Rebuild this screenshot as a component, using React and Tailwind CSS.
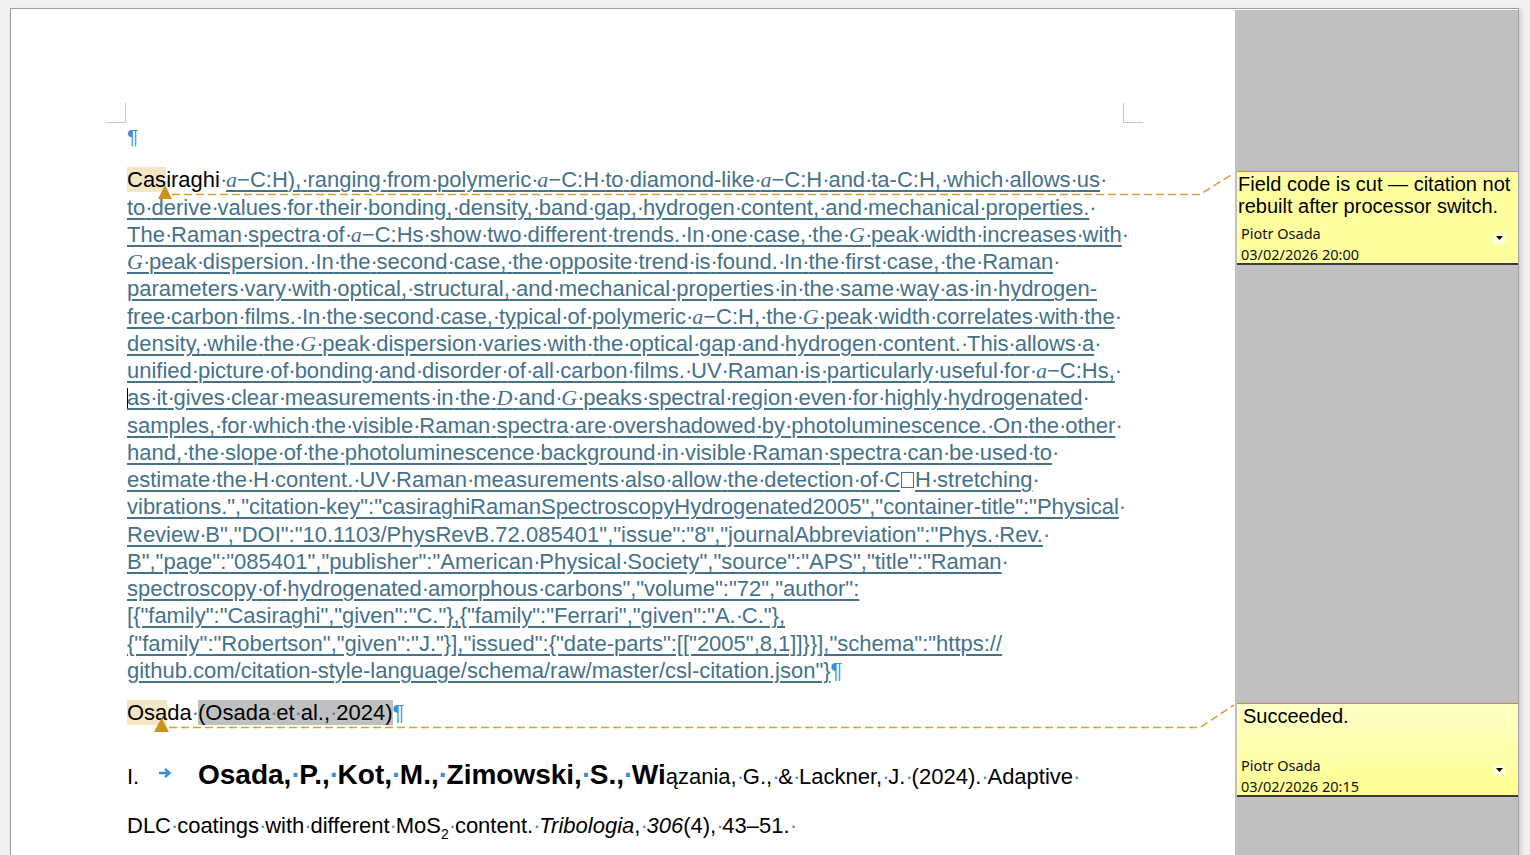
import { Children } from "react"

const TEAL = "text-[#44728a]"

// a formatting-mark dot that takes the width of a space
function Sp({ className = "" }) {
  return <span className={`tracking-[-0.055em] ${className}`}>·</span>
}

function withDots(children) {
  return Children.map(children, (c) => {
    if (typeof c !== "string") return c
    const parts = c.split("·")
    return parts.map((p, i) => (
      <span key={i}>
        {i > 0 ? <Sp /> : null}
        {p}
      </span>
    ))
  })
}

function M({ children }) {
  return <span className="font-['Liberation_Serif'] italic text-[22px]">{children}</span>
}

function Aa() {
  return (
    <>
      <M>a</M>−C:H
    </>
  )
}

function Line({ children, tail = true, before = null }) {
  return (
    <div className="h-[27.25px] leading-[27.25px] whitespace-nowrap">
      {before}
      <span className="underline decoration-[1.5px] underline-offset-[3px]">{withDots(children)}</span>
      {tail ? <Sp /> : null}
    </div>
  )
}

function Dot() {
  return <Sp className="text-[#3a8fd6]" />
}

function Comment({ text, date, gradient, textPad }) {
  return (
    <div
      className={`h-[94px] border-t border-t-[#c8961e] border-b-2 border-b-[#3a3a3a] flex flex-col ${
        gradient ? "bg-gradient-to-b from-[#ffffc8] to-[#ffff90]" : "bg-[#ffffa0]"
      }`}
    >
      <div className={`flex-1 font-['Liberation_Sans'] text-[20px] leading-[22px] text-black ${textPad}`}>{text}</div>
      <div className="flex items-center justify-between pl-[4px] pr-[13px] -mb-[2px]">
        <div className="font-['Noto_Sans'] text-[14.5px] leading-[21px] text-[#111]">
          <div>Piotr Osada</div>
          <div>{date}</div>
        </div>
        <div className="w-[11px] h-[11px] bg-[#ffffd8] flex items-center justify-center mb-[12px]">
          <svg width="7" height="4" viewBox="0 0 7 4">
            <path d="M0 0H7L3.5 4Z" fill="#000" />
          </svg>
        </div>
      </div>
    </div>
  )
}

export default function App() {
  return (
    <div className="relative h-[855px] overflow-hidden bg-[#f0f0f0] pl-[10px] pt-[8px] pr-[11px]">
      <div className="flex h-[900px] border border-[#a0a0a0] shadow-[2px_2px_4px_rgba(0,0,0,0.15)]">
        {/* page */}
        <div className="w-[1224px] bg-white pt-[94px] font-['Liberation_Sans'] text-[22px]">
          <div className="flex justify-between pl-[95px] pr-[92px]">
            <div className="w-[20px] h-[20px] border-r border-b border-[#c4c4c4]" />
            <div className="w-[20px] h-[20px] border-l border-b border-[#c4c4c4]" />
          </div>
          <div className="pl-[116px]">
            <div className="h-[27.25px] leading-[27.25px] text-[#3a8fd6] text-[21px]">¶</div>

            <div className={`mt-[16px] ${TEAL}`}>
              <div className="h-[27.25px] leading-[27.25px] whitespace-nowrap">
                <span className="text-black bg-[#f2e6c4]">Cas</span>
                <span className="text-black">iraghi</span>
                <Sp />
                <span className="underline decoration-[1.5px] underline-offset-[3px]">
                  {withDots([
                    <Aa key="a" />,
                    "),·ranging·from·polymeric·",
                    <Aa key="b" />,
                    "·to·diamond-like·",
                    <Aa key="c" />,
                    "·and·ta-C:H,·which·allows·us",
                  ])}
                </span>
                <Sp />
              </div>
              <Line>to·derive·values·for·their·bonding,·density,·band·gap,·hydrogen·content,·and·mechanical·properties.</Line>
              <Line>
                The·Raman·spectra·of·<M>a</M>−C:Hs·show·two·different·trends.·In·one·case,·the·<M>G</M>·peak·width·increases·with
              </Line>
              <Line>
                <M>G</M>·peak·dispersion.·In·the·second·case,·the·opposite·trend·is·found.·In·the·first·case,·the·Raman
              </Line>
              <Line tail={false}>
                parameters·vary·with·optical,·structural,·and·mechanical·properties·in·the·same·way·as·in·hydrogen-
              </Line>
              <Line>
                free·carbon·films.·In·the·second·case,·typical·of·polymeric·<Aa />,·the·<M>G</M>·peak·width·correlates·with·the
              </Line>
              <Line>
                density,·while·the·<M>G</M>·peak·dispersion·varies·with·the·optical·gap·and·hydrogen·content.·This·allows·a
              </Line>
              <Line>
                unified·picture·of·bonding·and·disorder·of·all·carbon·films.·UV·Raman·is·particularly·useful·for·<M>a</M>−C:Hs,
              </Line>
              <Line before={<span className="inline-block w-px h-[22px] bg-black align-[-5px] -mr-px" />}>
                as·it·gives·clear·measurements·in·the·<M>D</M>·and·<M>G</M>·peaks·spectral·region·even·for·highly·hydrogenated
              </Line>
              <Line>
                samples,·for·which·the·visible·Raman·spectra·are·overshadowed·by·photoluminescence.·On·the·other
              </Line>
              <Line>hand,·the·slope·of·the·photoluminescence·background·in·visible·Raman·spectra·can·be·used·to</Line>
              <Line>
                estimate·the·H·content.·UV·Raman·measurements·also·allow·the·detection·of·C
                <span className="inline-block w-[13px] h-[16px] border border-current align-[-1px] mx-[1px]" />
                H·stretching
              </Line>
              <Line>vibrations.","citation-key":"casiraghiRamanSpectroscopyHydrogenated2005","container-title":"Physical</Line>
              <Line>Review·B","DOI":"10.1103/PhysRevB.72.085401","issue":"8","journalAbbreviation":"Phys.·Rev.</Line>
              <Line>B","page":"085401","publisher":"American·Physical·Society","source":"APS","title":"Raman</Line>
              <Line tail={false}>spectroscopy·of·hydrogenated·amorphous·carbons","volume":"72","author":</Line>
              <Line tail={false}>{'[{"family":"Casiraghi","given":"C."},{"family":"Ferrari","given":"A.·C."},'}</Line>
              <Line tail={false}>{'{"family":"Robertson","given":"J."}],"issued":{"date-parts":[["2005",8,1]]}}],"schema":"https://'}</Line>
              <div className="h-[27.25px] leading-[27.25px] whitespace-nowrap">
                <span className="underline decoration-[1.5px] underline-offset-[3px]">
                  {'github.com/citation-style-language/schema/raw/master/csl-citation.json"}'}
                </span>
                <span className="text-[#3a8fd6]">¶</span>
              </div>
            </div>

            <div className="mt-[15px] h-[27.25px] leading-[27.25px] whitespace-nowrap text-black">
              <span className="bg-[#f2e6c4]">Osa</span>da<Sp className="text-[#4a7a98]" />
              <span className="bg-[#c0c0c0]">
                (Osada<Sp className="text-[#4a7a98]" />et<Sp className="text-[#4a7a98]" />al.,
                <Sp className="text-[#4a7a98]" />2024)
              </span>
              <span className="text-[#3a8fd6]">¶</span>
            </div>

            <div className="mt-[28px] flex items-baseline whitespace-nowrap text-black h-[36px]">
              <span className="w-[31px]">I.</span>
              <span className="w-[40px] flex items-center self-center pt-[2px]">
                <svg width="14" height="12" viewBox="0 0 14 12">
                  <path d="M1 6H11M7 2L11.5 6L7 10" fill="none" stroke="#3a8fd6" strokeWidth="2.4" />
                </svg>
              </span>
              <span className="font-bold text-[28px]">
                Osada,<Dot />P.,<Dot />Kot,<Dot />M.,<Dot />Zimowski,<Dot />S.,<Dot />Wi
              </span>
              <span>
                ązania,<Dot />G.,<Dot />&amp;<Dot />Lackner,<Dot />J.<Dot />(2024).<Dot />Adaptive<Dot />
              </span>
            </div>

            <div className="mt-[22px] h-[27.25px] leading-[27.25px] whitespace-nowrap text-black">
              DLC<Dot />coatings<Dot />with<Dot />different<Dot />MoS<sub className="text-[14px] align-[-2px]">2</sub>
              <Dot />content.<Dot />
              <i>Tribologia</i>,<Dot />
              <i>306</i>(4),<Dot />43–51.<Dot />
            </div>
          </div>
        </div>

        {/* comments margin */}
        <div className="flex-1 bg-[#c0c0c0] pl-[2px] border-t border-t-white">
          <div className="mt-[161px]">
            <Comment
              text={
                <>
                  Field code is cut — citation not
                  <br />
                  rebuilt after processor switch.
                </>
              }
              date="03/02/2026 20:00"
              textPad="pl-[1px] pt-[1px]"
            />
          </div>
          <div className="mt-[438px]">
            <Comment text="Succeeded." date="03/02/2026 20:15" gradient textPad="pl-[6px] pt-[1px]" />
          </div>
        </div>
      </div>

      {/* comment anchors */}
      <svg className="absolute inset-0 pointer-events-none" width="1530" height="855">
        <path d="M172 194.5H1200L1234 173" fill="none" stroke="#d4a030" strokeWidth="1.5" strokeDasharray="8 4" />
        <path d="M169 727.5H1200L1234 705" fill="none" stroke="#d4a030" strokeWidth="1.5" strokeDasharray="8 4" />
        <path d="M165 185L172 199H158Z" fill="#cc9418" />
        <path d="M161.5 718L169 732H154Z" fill="#cc9418" />
      </svg>
    </div>
  )
}
